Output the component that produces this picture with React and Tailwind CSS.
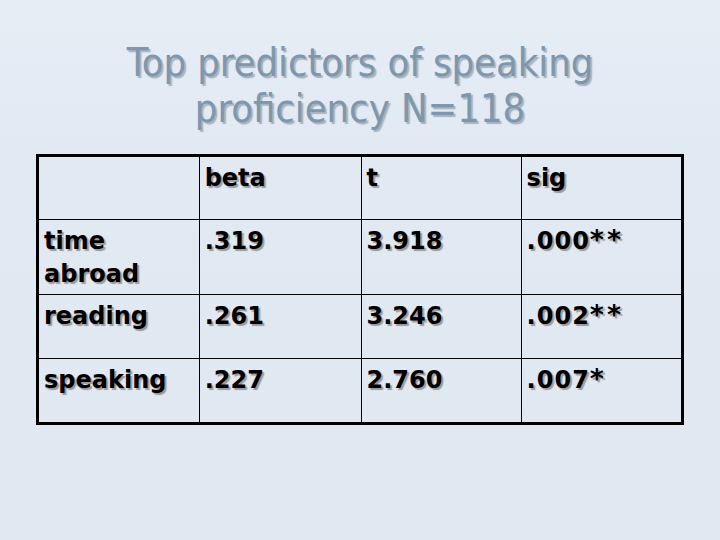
export default function App() {
  const rows = [
    ["time abroad", ".319", "3.918", [".000", "**"]],
    ["reading", ".261", "3.246", [".002", "**"]],
    ["speaking", ".227", "2.760", [".007", "*"]],
  ];
  const heights = ["h-[75px]", "h-[64px]", "h-[65px]"];
  return (
    <div className="w-[720px] h-[540px] overflow-hidden bg-[linear-gradient(180deg,#e6edf5_0%,#e1e9f3_30%,#e0e8f2_100%)] flex flex-col items-center">
      <h1
        className="mt-[39px] text-center text-[#7d98ae] text-[39.5px] leading-[46px] [text-shadow:2px_2px_1px_#a9b3bd]"
        style={{ fontFamily: "'DejaVu Sans Condensed', 'DejaVu Sans', sans-serif" }}
      >
        Top predictors of speaking
        <br />
        proficiency N=118
      </h1>
      <table
        className="mt-[23px] w-[648px] border-collapse border-[3px] border-black text-black font-bold text-[24px] leading-[33px] [text-shadow:2px_2px_1px_#9a9a9a]"
        style={{ fontFamily: "'DejaVu Sans', sans-serif" }}
      >
        <tbody>
          <tr className="h-[64px]">
            <td className="w-[162px] border border-black align-top px-[5px] pt-[5px]"></td>
            <td className="w-[163px] border border-black align-top px-[5px] pt-[5px]">beta</td>
            <td className="w-[161px] border border-black align-top px-[5px] pt-[5px]">t</td>
            <td className="w-[162px] border border-black align-top px-[5px] pt-[5px]">sig</td>
          </tr>
          {rows.map((r, i) => (
            <tr key={i} className={heights[i]}>
              {r.map((c, j) => (
                <td key={j} className="border border-black align-top px-[5px] pt-[5px]">
                  {Array.isArray(c) ? (
                    <>
                      <span className="tracking-[1px]">{c[0]}</span>
                      <span className="text-[27px] leading-[0] tracking-[3px]">{c[1]}</span>
                    </>
                  ) : (
                    c
                  )}
                </td>
              ))}
            </tr>
          ))}
        </tbody>
      </table>
    </div>
  );
}
